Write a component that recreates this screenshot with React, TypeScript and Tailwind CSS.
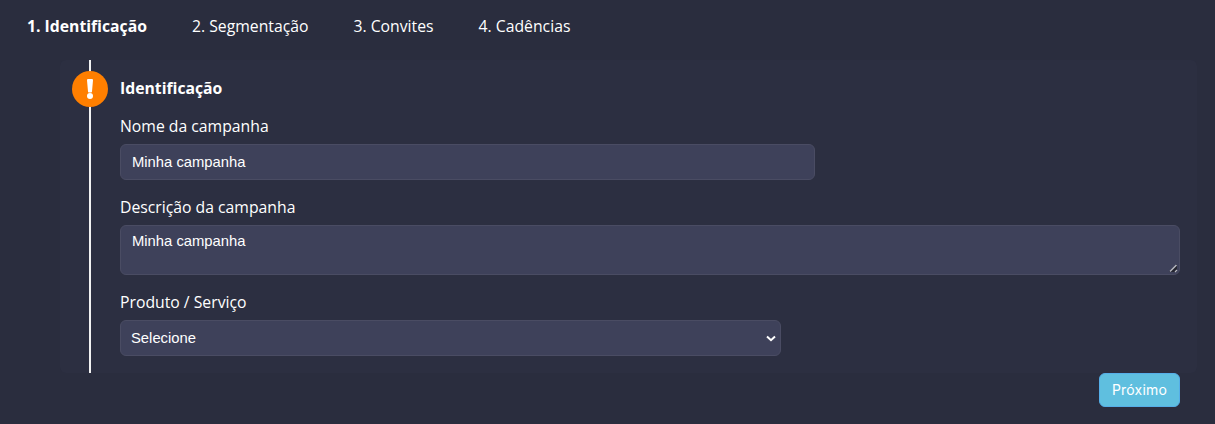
const labelClass = "block text-white text-[15.75px] leading-6 font-['Open_Sans',sans-serif]";
const fieldClass =
  "block bg-[#3e415a] border border-[#4a4c63] rounded-md text-white text-[14.8px] font-['Liberation_Sans',sans-serif] outline-none [color-scheme:dark]";

function Tab({ label, active }: { label: string; active?: boolean }) {
  return <span className={active ? 'font-bold text-white' : 'text-white'}>{label}</span>;
}

export default function App() {
  return (
    <div className="h-[424px] bg-[#2a2d3e] overflow-hidden font-['Open_Sans',sans-serif]">
      <div className="h-[60px] flex items-start pt-[14px] pl-[27px] gap-[45px] text-[15.75px] leading-6">
        <Tab label="1. Identificação" active />
        <Tab label="2. Segmentação" />
        <Tab label="3. Convites" />
        <Tab label="4. Cadências" />
      </div>

      <div className="ml-[60px] mr-[18px] h-[313px] bg-[#2c2f41] rounded-md pl-[29px]">
        <div className="relative h-full border-l-2 border-[#f2f2f2] pl-[29px] pr-[17px]">
          <div className="absolute left-[-19px] top-[11px] w-9 h-9 rounded-full bg-[#ff7f00] flex items-center justify-center">
            <svg width="8" height="20" viewBox="0 0 8 20" fill="white">
              <path d="M1 1.2C1 .5 1.5 0 2.2 0h3.6C6.500 0 7 .5 7 1.200L6 12.500C5.950 13.200 5.500 13.500 5 13.500H3C2.500 13.500 2.050 13.200 2 12.500Z" />
              <circle cx="4" cy="17" r="3" />
            </svg>
          </div>

          <h2 className="pt-4 text-white text-[15.75px] leading-6 font-bold">Identificação</h2>

          <label className={`${labelClass} mt-[14px]`}>Nome da campanha</label>
          <input
            readOnly
            value="Minha campanha"
            className={`${fieldClass} mt-[6px] w-[695px] h-9 px-[11px]`}
          />

          <label className={`${labelClass} mt-[15px]`}>Descrição da campanha</label>
          <div className="relative mt-[6px]">
            <textarea
              readOnly
              value="Minha campanha"
              className={`${fieldClass} w-full h-[50px] px-[11px] py-[5px] leading-5 resize-none`}
            />
            <svg
              className="absolute right-[2px] bottom-[2px] pointer-events-none"
              width="10"
              height="10"
              viewBox="0 0 10 10"
            >
              <path d="M9 1V9H1Z" fill="#23242f" />
              <path d="M2 8.500L8.500 2" stroke="#b9bac2" strokeWidth="1.500" />
              <path d="M7 9L9 7" stroke="#b9bac2" strokeWidth="1.200" />
            </svg>
          </div>

          <label className={`${labelClass} mt-[15px]`}>Produto / Serviço</label>
          <div className="relative mt-[6px] w-[661px]">
            <select className={`${fieldClass} w-full h-9 pl-[10px] pr-6 appearance-none`}>
              <option>Selecione</option>
            </select>
            <svg
              className="absolute right-[5px] top-[15px] pointer-events-none"
              width="10"
              height="7"
              viewBox="0 0 10 7"
              fill="none"
            >
              <path d="M1 1.500L5 5.200L9 1.500" stroke="white" strokeWidth="2" />
            </svg>
          </div>
        </div>
      </div>

      <div className="flex justify-end pr-[35px]">
        <button className="w-[81px] h-[34px] bg-[#5fbfdf] border border-[#55aee8] rounded-md text-white text-sm tracking-[0.2px] font-['Inter',sans-serif]">
          Próximo
        </button>
      </div>
    </div>
  );
}
